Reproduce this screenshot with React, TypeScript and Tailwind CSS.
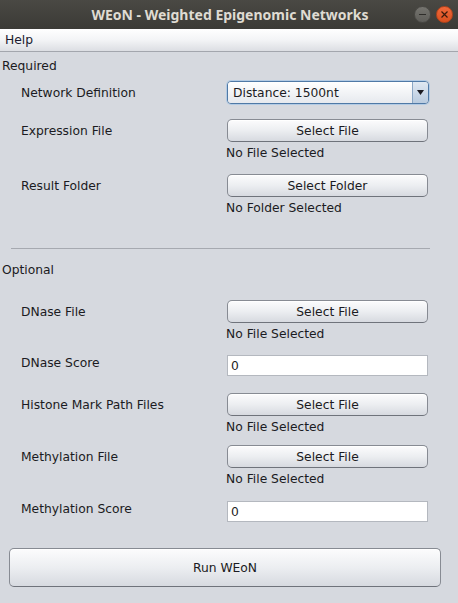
import React from "react";

const font = { fontFamily: '"DejaVu Sans", "Liberation Sans", sans-serif' };

function Btn({ label }: { label: string }) {
  return (
    <div className="h-[23px] w-[201px] rounded-[5px] border border-[#878b93] border-b-[#6f737b] bg-gradient-to-b from-[#fcfcfd] via-[#eceef1] to-[#d7dae0] flex items-center justify-center text-[12.3px] leading-[16px] text-[#1b1b22] shadow-[inset_0_1px_0_#ffffff]">
      {label}
    </div>
  );
}

function Sub({ text }: { text: string }) {
  return <div className="mt-[3px] ml-[-1px] text-[12.3px] leading-[16px] text-[#1b1b22]">{text}</div>;
}

function Input() {
  return (
    <div className="h-[21px] w-[201px] bg-white border border-[#b4b8bf] flex items-center pl-[3px] text-[12.3px] leading-[16px] text-[#1b1b22]">
      0
    </div>
  );
}

function ButtonRow({ label, btn, sub, mt }: { label: string; btn: string; sub: string; mt: string }) {
  return (
    <div className={`flex ${mt}`}>
      <div className="w-[227px] pl-[21px] h-[23px] flex items-center text-[12.3px] leading-[16px] text-[#1b1b22]">{label}</div>
      <div className="flex flex-col">
        <Btn label={btn} />
        <Sub text={sub} />
      </div>
    </div>
  );
}

function InputRow({ label, mt }: { label: string; mt: string }) {
  return (
    <div className={`flex ${mt}`}>
      <div className="w-[227px] pl-[21px] text-[12.3px] leading-[16px] text-[#1b1b22]">{label}</div>
      <Input />
    </div>
  );
}

export default function App() {
  return (
    <div className="w-[458px] h-[603px] flex flex-col bg-[#d6d9df] overflow-hidden" style={font}>
      {/* Title bar */}
      <div className="h-[29px] bg-gradient-to-b from-[#4a4944] to-[#3b3a36] flex items-center relative">
        <div
          className="flex-1 text-center text-[14px] font-bold text-[#dfdbd2] pl-[2px]"
          style={{ fontFamily: '"Noto Sans", "Open Sans", sans-serif' }}
        >
          WEoN - Weighted Epigenomic Networks
        </div>
        <div className="absolute right-[5px] top-[6px] flex gap-[5px]">
          <div className="w-[17px] h-[17px] rounded-full bg-gradient-to-b from-[#75746f] to-[#5e5d59] border border-[#4a4945] flex items-center justify-center">
            <div className="w-[7px] h-[1px] bg-[#2e2d2a]" />
          </div>
          <div className="w-[17px] h-[17px] rounded-full bg-gradient-to-b from-[#f0683a] to-[#d9501e] border border-[#b8441a] flex items-center justify-center">
            <svg width="7" height="7" viewBox="0 0 7 7">
              <path d="M0.5 0.5 L6.5 6.5 M6.5 0.5 L0.5 6.5" stroke="#3a1a0c" strokeWidth="1.2" />
            </svg>
          </div>
        </div>
      </div>

      {/* Menu bar */}
      <div className="h-[23px] bg-gradient-to-b from-[#ffffff] via-[#f3f4f6] to-[#dcdee3] border-b border-[#a3a6ad] flex items-center pl-[5px] text-[12.3px] leading-[16px] text-[#1b1b30]">
        Help
      </div>

      {/* Content */}
      <div className="flex flex-col">
        <div className="mt-[6px] pl-[2px] text-[12.3px] leading-[16px] text-[#1b1b22]">Required</div>

        <div className="flex mt-[7px]">
          <div className="w-[227px] pl-[21px] h-[23px] flex items-center text-[12.3px] leading-[16px] text-[#1b1b22]">Network Definition</div>
          <div className="h-[23px] w-[202px] rounded-[4px] border border-[#4f79a6] shadow-[0_0_0_1px_#b3cbe4] flex overflow-hidden">
            <div className="flex-1 bg-gradient-to-b from-[#ffffff] to-[#e6e9ee] flex items-center pl-[5px] text-[12.3px] leading-[16px] text-[#1b1b22]">
              Distance: 1500nt
            </div>
            <div className="w-[16px] border-l border-[#8aa6c4] bg-gradient-to-b from-[#dfe8f2] to-[#b9cbdf] flex items-center justify-center">
              <svg width="7" height="5" viewBox="0 0 7 5">
                <path d="M0 0 H7 L3.5 5 Z" fill="#1b1b22" />
              </svg>
            </div>
          </div>
        </div>

        <ButtonRow label="Expression File" btn="Select File" sub="No File Selected" mt="mt-[15px]" />
        <ButtonRow label="Result Folder" btn="Select Folder" sub="No Folder Selected" mt="mt-[13px]" />

        <div className="mt-[32px] ml-[11px] w-[419px] h-[1px] bg-[#a6a9b0]" />

        <div className="mt-[13px] pl-[2px] text-[12.3px] leading-[16px] text-[#1b1b22]">Optional</div>

        <ButtonRow label="DNase File" btn="Select File" sub="No File Selected" mt="mt-[22px]" />
        <InputRow label="DNase Score" mt="mt-[13px]" />
        <ButtonRow label="Histone Mark Path Files" btn="Select File" sub="No File Selected" mt="mt-[17px]" />
        <ButtonRow label="Methylation File" btn="Select File" sub="No File Selected" mt="mt-[10px]" />
        <InputRow label="Methylation Score" mt="mt-[14px]" />

        <div className="mt-[26px] ml-[9px] w-[432px] h-[39px] rounded-[5px] border border-[#878b93] border-b-[#6f737b] bg-gradient-to-b from-[#fcfcfd] via-[#eceef1] to-[#d7dae0] shadow-[inset_0_1px_0_#ffffff] flex items-center justify-center text-[12.3px] leading-[16px] text-[#1b1b22]">
          Run WEoN
        </div>
      </div>
    </div>
  );
}
